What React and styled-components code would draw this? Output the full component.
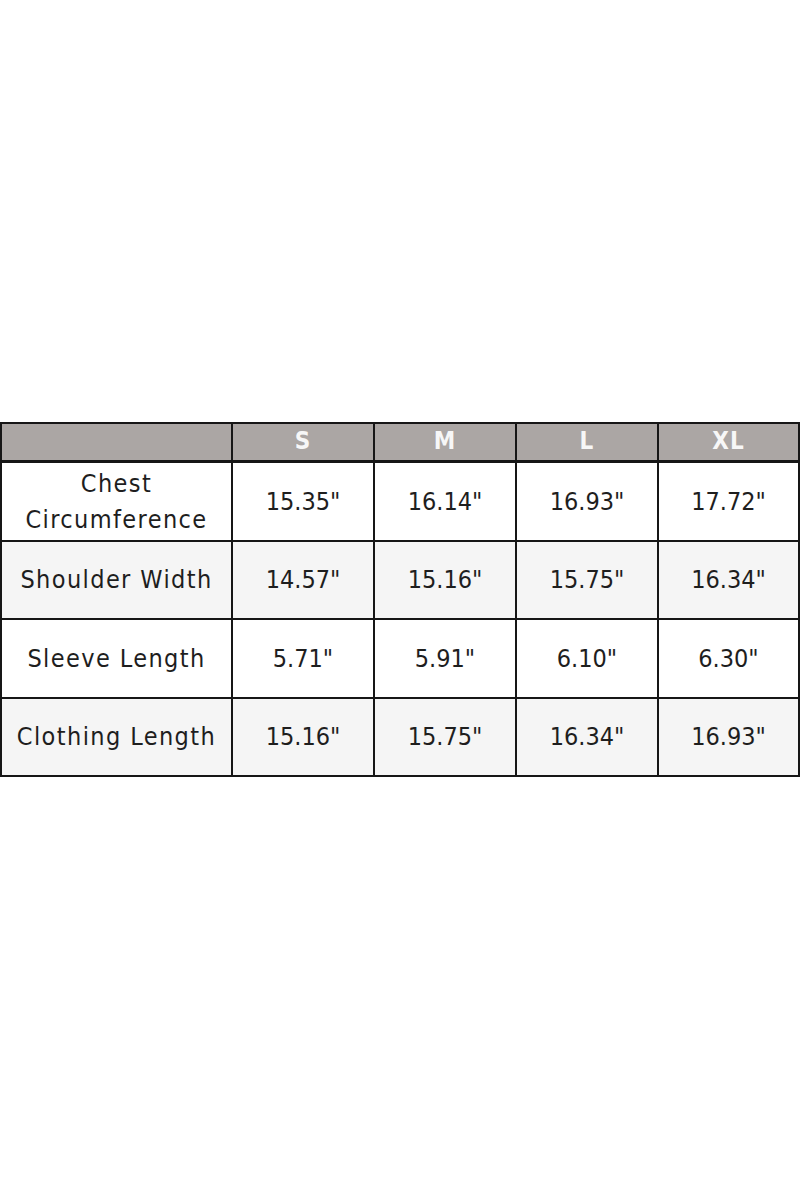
import React from "react";
import styled, { createGlobalStyle } from "styled-components";

const Global = createGlobalStyle`
  html, body { margin: 0; padding: 0; background: #ffffff; }
  body { font-family: "DejaVu Sans Condensed", "DejaVu Sans", sans-serif; }
`;

const Page = styled.div`
  width: 800px;
  height: 1200px;
  padding-top: 422px;
  box-sizing: border-box;
`;

const Chart = styled.div`
  width: 800px;
  box-sizing: border-box;
  display: grid;
  grid-template-columns: 229px 140px 140px 140px 1fr;
  grid-template-rows: 37px repeat(4, 76.5px);
  gap: 2px;
  padding: 2px;
  background: #161616;
`;

const HeadCell = styled.div`
  background: #aba6a4;
  color: #f7f7f7;
  font-weight: bold;
  font-size: 24px;
  letter-spacing: 1px;
  display: flex;
  align-items: center;
  justify-content: center;
  padding-bottom: 2px;
  border-bottom: 1px solid #161616;
`;

const Cell = styled.div`
  background: ${(p) => (p.$shade ? "#f5f5f5" : "#ffffff")};
  color: #1e1e1e;
  font-size: 25px;
  line-height: 36px;
  letter-spacing: ${(p) => (p.$label ? "1.4px" : "0px")};
  display: flex;
  flex-direction: column;
  align-items: center;
  justify-content: center;
  text-align: center;
  padding-top: 1px;
`;

const sizes = ["S", "M", "L", "XL"];
const rows = [
  { label: ["Chest", "Circumference"], values: ['15.35"', '16.14"', '16.93"', '17.72"'] },
  { label: ["Shoulder Width"], values: ['14.57"', '15.16"', '15.75"', '16.34"'] },
  { label: ["Sleeve Length"], values: ['5.71"', '5.91"', '6.10"', '6.30"'] },
  { label: ["Clothing Length"], values: ['15.16"', '15.75"', '16.34"', '16.93"'] },
];

export default function App() {
  return (
    <Page>
      <Global />
      <Chart>
        <HeadCell />
        {sizes.map((s) => (
          <HeadCell key={s}>{s}</HeadCell>
        ))}
        {rows.map((r, i) => (
          <React.Fragment key={i}>
            <Cell $label $shade={i % 2 === 1}>
              {r.label.map((l, j) => (
                <span key={j}>{l}</span>
              ))}
            </Cell>
            {r.values.map((v, j) => (
              <Cell key={j} $shade={i % 2 === 1}>
                {v}
              </Cell>
            ))}
          </React.Fragment>
        ))}
      </Chart>
    </Page>
  );
}
